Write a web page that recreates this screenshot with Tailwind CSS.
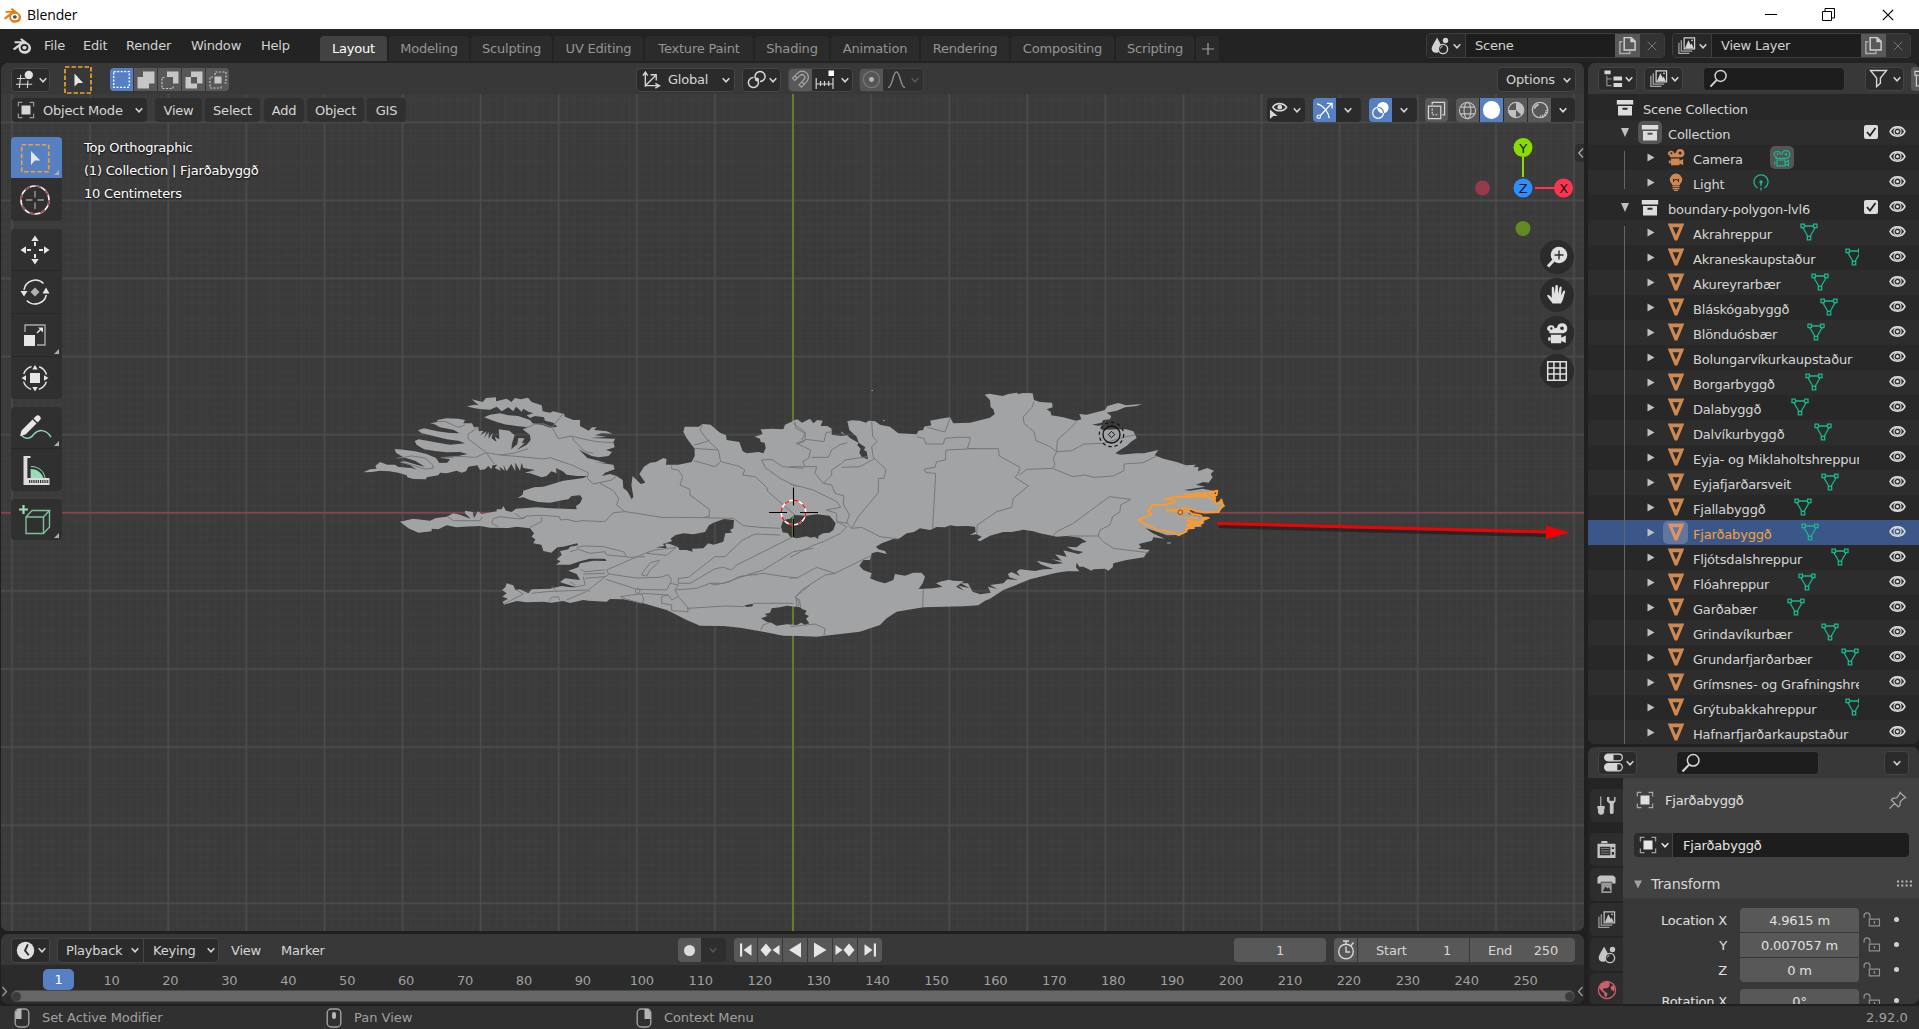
<!DOCTYPE html>
<html lang="en">
<head>
<meta charset="utf-8">
<title>Blender</title>
<script src="https://cdn.jsdelivr.net/npm/@tailwindcss/browser@4"></script>
</head>
<body class="w-[1919px] h-[1029px] overflow-hidden bg-[#202020] font-['DejaVu_Sans',sans-serif] text-[13px] leading-none tracking-[-0.2px] text-[#d6d6d6] whitespace-nowrap flex flex-col">

<svg width="0" height="0" class="absolute" fill="none">
  <symbol id="chev" viewBox="0 0 10 10"><path d="M1.7 3.2 5 6.8 8.3 3.2" fill="none" stroke="currentColor" stroke-width="1.5"/></symbol>
  <symbol id="logo" viewBox="0 0 20 20"><path d="M.8 13.8 8 8.2H2.6V6.3h7.6L8 4.6 9.6 3.2l7 5.4a6.2 5.7 0 1 1-10 4.2V12l-3.9 3.2z" fill="currentColor"/><ellipse cx="12.5" cy="12.6" rx="3.9" ry="3.5" class="fill-(--ring)"/><ellipse cx="12.5" cy="12.6" rx="2.1" ry="1.9" class="fill-(--eye)"/></symbol>
  <symbol id="scene" viewBox="0 0 20 20"><path d="M7 1.5c1.8 3.5 4.3 6.800 4.300 9.500L8 16.500c-3.300 1-6.300-.5-6.300-3.500C1.700 10 5 6 7 1.500z" fill="currentColor"/><circle cx="15.500" cy="4.500" r="2.700" fill="currentColor"/><circle cx="13" cy="13" r="4.600" fill="#282828" stroke="currentColor" stroke-width="1.400"/><path d="M10.500 12.500a2.500 2.500 0 0 1 2-2.200" fill="none" stroke="currentColor"/></symbol>
  <symbol id="layers" viewBox="0 0 20 20"><path d="M2 7v11.300h11M4.500 4.500V16H16" fill="none" stroke="currentColor" stroke-width="1.300" opacity=".75"/><path d="M7.500 2h11v11.500h-11z" fill="none" stroke="currentColor" stroke-width="1.300"/><path d="M8.500 12.500 12 4.500l2.500 5 1-1.500 2 4.500z" fill="currentColor"/><circle cx="15.800" cy="4.600" r="1" fill="currentColor"/></symbol>
  <symbol id="copy" viewBox="0 0 20 20"><path d="M4.500 6H2v12.500h10.500V16" fill="none" stroke="currentColor" stroke-width="1.500" opacity=".7"/><path d="M6.500 1.700h7.500l4 4v9h-11.500z" fill="none" stroke="currentColor" stroke-width="1.500"/><path d="M13 1.500v5h5z" fill="currentColor"/></symbol>
  <symbol id="ex" viewBox="0 0 10 10"><path d="m.7.7 8.600 8.600m0-8.600L.7 9.300" fill="none" stroke="currentColor" stroke-width="1"/></symbol>
  <symbol id="obj" viewBox="0 0 20 20"><path d="M1.500 6V1.500H6M14 1.500h4.500V6M18.500 14v4.500H14M6 18.500H1.500V14" fill="none" stroke="currentColor" stroke-width="1.300" opacity=".65"/><path d="M5 5h10v10H5z" fill="currentColor"/></symbol>
  <symbol id="cursor" viewBox="0 0 10 14"><path d="M.5.5v13l3.600-3.600h5z" fill="#e6e6e6"/></symbol>
  <symbol id="search" viewBox="0 0 20 20"><circle cx="12.200" cy="7.300" r="5.800" fill="none" stroke="currentColor" stroke-width="1.500"/><path d="m8 11.700-6.500 6.800" stroke="currentColor" stroke-width="2"/></symbol>
  <symbol id="box" viewBox="0 0 18 18"><path d="M.8 1h16.400v4.500H.8z" fill="currentColor"/><path d="M2 7h14v9.500H2zm4.500 1.800v2h5v-2z" fill="currentColor" fill-rule="evenodd"/></symbol>
  <symbol id="mesh" viewBox="0 0 18 18"><path d="M.7.600h16.600L10.300 17.500H7.700z" fill="currentColor"/><path d="M5.600 4.300h6.800L9 12z" class="fill-(--hole)"/></symbol>
  <symbol id="mdata" viewBox="0 0 18 18"><path d="M4 3h10M3 5l5 8.500M15 5l-5 8.500" stroke="currentColor" stroke-width="1.300" fill="none"/><path d="M1 1.200h3.400v3.400H1zm12.600 0H17v3.400h-3.400zM7.300 13.400h3.400v3.400H7.300z" fill="none" stroke="currentColor" stroke-width="1.300"/></symbol>
  <symbol id="cam" viewBox="0 0 18 18"><path d="M4 2.700a2.800 2.800 0 0 1 3 2.600 3.200 3.200 0 0 1 2-.5A4.200 4.200 0 1 1 14 9.300H2.800V7.500C0 7 .3 3 4 2.700zm.300 1.600a1 1 0 1 0 .1 2 1 1 0 0 0 0-2zM13 3.600a1.500 1.500 0 1 0 .1 3 1.500 1.500 0 0 0 0-3z" fill="currentColor" fill-rule="evenodd"/><path d="M4 10.500h8.500v2.300l3.700-1.800v6.200l-3.700-1.700v1.800H4z" fill="currentColor"/><path d="M1.800 12.500h2v2.800h-2z" fill="currentColor"/></symbol>
  <symbol id="camo" viewBox="0 0 18 18"><g fill="none" stroke="currentColor" stroke-width="1.200"><path d="M4 2.500A2.400 2.400 0 0 1 7 5h2a3.900 3.900 0 1 1 4.500 4.300H3V7.500C0 7 .5 2.800 4 2.500zM4 11h8v5.800H4zM12 13.500l3.500-2v5l-3.500-1.500M1.800 12.500v3"/></g><circle cx="4.500" cy="5" r="1" fill="currentColor"/><circle cx="13" cy="5.200" r="1.200" fill="currentColor"/></symbol>
  <symbol id="bulb" viewBox="0 0 18 18"><path d="M9 .5a6.300 6.300 0 0 1 6.200 6.300c0 2.500-2.200 3.700-2.700 5.700h-7c-.500-2-2.700-3.200-2.700-5.700A6.300 6.300 0 0 1 9 .5z" fill="currentColor"/><path d="M6.500 9V6l1.300 1.300L9 6l1.200 1.300L11.500 6v3" stroke="#2b2b2b" fill="none"/><path d="M5.500 13.700h7M5.500 15.600h7M7 17.400h4" stroke="currentColor" stroke-width="1.200"/></symbol>
  <symbol id="ldata" viewBox="0 0 18 18"><circle cx="9" cy="7.800" r="7" fill="none" stroke="currentColor" stroke-width="1.300" stroke-dasharray="37 7" transform="rotate(118 9 7.800)"/><circle cx="9" cy="8" r="1.700" fill="currentColor"/><path d="M9 9v9" stroke="currentColor" stroke-width="1.300" stroke-dasharray="3 1.500"/></symbol>
  <symbol id="eye" viewBox="0 0 18 14"><path d="M1 7C4 .3 14 .3 17 7 14 13.700 4 13.700 1 7z" fill="none" stroke="currentColor" stroke-width="1.900"/><circle cx="9" cy="7" r="3.800" fill="none" stroke="currentColor" stroke-width="1.200"/><circle cx="9" cy="7" r="1.700" fill="currentColor"/></symbol>
  <symbol id="mouse" viewBox="0 0 16 20"><rect x="1.200" y="1" width="13.600" height="18" rx="4" fill="none" stroke="currentColor" stroke-width="1.400"/></symbol>
  <symbol id="lock" viewBox="0 0 20 16"><path d="M1.200 6V4a3.300 3.300 0 0 1 6.600 0v3" fill="none" stroke="currentColor" stroke-width="1.300"/><path d="M7 7.500h11.300V15H7z" fill="none" stroke="currentColor" stroke-width="1.300"/><path d="M12.700 9.800v3" stroke="currentColor" stroke-width="1.500"/></symbol>
</svg>

<!-- title bar -->
<div class="h-[29px] shrink-0 bg-white flex items-center text-black">
  <svg class="w-[19px] h-[19px] ml-[3px] text-[#e87d0d] [--ring:#fff] [--eye:#265787]"><use href="#logo"/></svg>
  <span class="ml-[5px] text-[14px] font-['Open_Sans',sans-serif] tracking-[-0.100px]">Blender</span>
  <svg class="ml-auto w-[12px] h-[12px]" viewBox="0 0 12 12"><path d="M0 5.500h12" stroke="#000"/></svg>
  <svg class="ml-[45px] w-[13px] h-[13px]" viewBox="0 0 13 13"><path d="M.5 3.500h9v9h-9zM3 3V.500h9.500V10H10" fill="none" stroke="#000"/></svg>
  <svg class="ml-[47px] mr-[25px] w-[12px] h-[12px]"><use href="#ex"/></svg>
</div>

<!-- menu + workspaces -->
<div class="h-[34px] shrink-0 bg-[#232323] flex text-[#d2d2d2]">
  <div class="flex items-center h-[32px] w-[320px]">
    <svg class="w-[20px] h-[20px] ml-[12px] text-[#d8d8d8] [--ring:#232323] [--eye:#d8d8d8]"><use href="#logo"/></svg>
    <span class="ml-[12px] w-[39px]">File</span><span class="w-[43px]">Edit</span><span class="w-[65px]">Render</span><span class="w-[70px]">Window</span><span>Help</span>
  </div>
  <div class="flex gap-[2px] mt-[7px] h-[25px] text-[#959595]">
    <div class="w-[67px] rounded-t-[4px] bg-[#424242] text-white flex items-center justify-center">Layout</div>
    <div class="w-[80px] rounded-t-[4px] bg-[#2b2b2b] flex items-center justify-center">Modeling</div>
    <div class="w-[81px] rounded-t-[4px] bg-[#2b2b2b] flex items-center justify-center">Sculpting</div>
    <div class="w-[89px] rounded-t-[4px] bg-[#2b2b2b] flex items-center justify-center">UV Editing</div>
    <div class="w-[108px] rounded-t-[4px] bg-[#2b2b2b] flex items-center justify-center">Texture Paint</div>
    <div class="w-[74px] rounded-t-[4px] bg-[#2b2b2b] flex items-center justify-center">Shading</div>
    <div class="w-[88px] rounded-t-[4px] bg-[#2b2b2b] flex items-center justify-center">Animation</div>
    <div class="w-[88px] rounded-t-[4px] bg-[#2b2b2b] flex items-center justify-center">Rendering</div>
    <div class="w-[103px] rounded-t-[4px] bg-[#2b2b2b] flex items-center justify-center">Compositing</div>
    <div class="w-[78px] rounded-t-[4px] bg-[#2b2b2b] flex items-center justify-center">Scripting</div>
    <div class="w-[23px] rounded-t-[4px] bg-[#2b2b2b] flex items-center justify-center"><svg class="w-[12px] h-[12px]" viewBox="0 0 12 12"><path d="M0 6h12M6 0v12" stroke="#a0a0a0" stroke-width="1.200"/></svg></div>
  </div>
  <div class="ml-auto mr-[8px] mt-[4px] flex gap-[7px] h-[25px]">
    <div class="flex rounded-[4px] border border-[#3d3d3d] overflow-hidden w-[239px]">
      <div class="w-[38px] bg-[#282828] flex items-center pl-[3px] gap-[2px]"><svg class="w-[20px] h-[20px]"><use href="#scene"/></svg><svg class="w-[10px] h-[10px]"><use href="#chev"/></svg></div>
      <div class="w-[150px] bg-[#1d1d1d] border-l border-[#3d3d3d] pl-[9px] flex items-center">Scene</div>
      <div class="w-[25px] bg-[#585858] flex items-center justify-center"><svg class="w-[19px] h-[19px]"><use href="#copy"/></svg></div>
      <div class="flex-1 bg-[#333] flex items-center justify-center text-[#777]"><svg class="w-[10px] h-[10px]"><use href="#ex"/></svg></div>
    </div>
    <div class="flex rounded-[4px] border border-[#3d3d3d] overflow-hidden w-[239px]">
      <div class="w-[38px] bg-[#282828] flex items-center pl-[4px] gap-[2px]"><svg class="w-[19px] h-[19px]"><use href="#layers"/></svg><svg class="w-[10px] h-[10px]"><use href="#chev"/></svg></div>
      <div class="w-[150px] bg-[#1d1d1d] border-l border-[#3d3d3d] pl-[9px] flex items-center">View Layer</div>
      <div class="w-[25px] bg-[#585858] flex items-center justify-center"><svg class="w-[19px] h-[19px]"><use href="#copy"/></svg></div>
      <div class="flex-1 bg-[#333] flex items-center justify-center text-[#777]"><svg class="w-[10px] h-[10px]"><use href="#ex"/></svg></div>
    </div>
  </div>
</div>

<div class="flex h-[943px] shrink-0">
<!-- left column -->
<div class="w-[1584px] shrink-0 pl-px mr-[4px] flex flex-col">
  <div class="h-[868px] rounded-[7px] overflow-hidden relative bg-[#3b3b3b]">
    <div class="h-[31px] bg-[#383838] flex items-center pl-[10px] pt-[2px] relative z-10">
      <div class="w-[39px] h-[24px] rounded-[4px] border border-[#454545] bg-[#2b2b2b] flex items-center pl-[4px]"><svg class="w-[19px] h-[19px]" viewBox="0 0 20 20"><path d="M1 9h9M0 15h17M5 5 3.500 19M12.500 11l-.5 8" stroke="currentColor" stroke-width="1.200" fill="none"/><circle cx="13.500" cy="5.200" r="4.400" fill="#e0e0e0"/></svg><svg class="w-[10px] h-[10px] ml-[3px]"><use href="#chev"/></svg></div>
      <svg class="ml-[14px] w-[28px] h-[28px]" viewBox="0 0 28 28"><rect x="1" y="1" width="26" height="26" fill="none" stroke="#f0a32e" stroke-width="1.700" stroke-dasharray="4.500 2"/><use href="#cursor" x="10" y="7" width="10" height="14"/></svg>
      <div class="ml-[18px] flex h-[23px] rounded-[4px] overflow-hidden gap-px text-[#c6c6c6]">
        <div class="w-[23px] bg-[#5680c2] flex items-center justify-center"><svg class="w-[17px] h-[17px]" viewBox="0 0 17 17"><rect x=".7" y=".7" width="15.600" height="15.600" fill="none" stroke="#fff" stroke-width="1.300" stroke-dasharray="2 1.500"/></svg></div>
        <div class="w-[23px] bg-[#585858] flex items-center justify-center"><svg class="w-[18px] h-[18px]" viewBox="0 0 18 18"><path d="M6 .5h11.500v12H12v5H.5V6H6z" fill="currentColor"/></svg></div>
        <div class="w-[23px] bg-[#585858] flex items-center justify-center"><svg class="w-[18px] h-[18px]" viewBox="0 0 18 18"><path d="M6 .5h11.500v12H12V6H6z" fill="currentColor"/><path d="M3.500 6.500H1v11h11V15" fill="none" stroke="currentColor" stroke-width="1.200" stroke-dasharray="2 1.500"/></svg></div>
        <div class="w-[23px] bg-[#585858] flex items-center justify-center"><svg class="w-[18px] h-[18px]" viewBox="0 0 18 18"><path d="M6 .5h11.500v12H12v5H.500V6H6zM6 6v6.500h6V6z" fill="currentColor" fill-rule="evenodd"/></svg></div>
        <div class="w-[23px] bg-[#585858] flex items-center justify-center"><svg class="w-[18px] h-[18px]" viewBox="0 0 18 18"><path d="M5.500 5.500h7v7h-7z" fill="currentColor"/><path d="M6 4V1h11v11h-3M4 6H1v11h11v-3" fill="none" stroke="currentColor" stroke-width="1.200" stroke-dasharray="2 1.500"/></svg></div>
      </div>
      <div class="ml-[407px] w-[99px] h-[24px] rounded-[4px] border border-[#454545] bg-[#2b2b2b] flex items-center pl-[5px]"><svg class="w-[19px] h-[19px]" viewBox="0 0 20 20"><path d="M3.500 17.500V3m-2.500 3 2.500-4L6 6M3 16.500h14m-3-2.500 4.500 2.500L14 19M4 16 14 6m-5-1h6v6" fill="none" stroke="currentColor" stroke-width="1.400"/></svg><span class="ml-[7px]">Global</span><svg class="w-[10px] h-[10px] ml-auto mr-[3px]"><use href="#chev"/></svg></div>
      <div class="ml-[7px] w-[39px] h-[24px] rounded-[4px] border border-[#454545] bg-[#2b2b2b] flex items-center pl-[4px]"><svg class="w-[20px] h-[20px]" viewBox="0 0 20 20"><path d="M11 10.500A5 5 0 1 1 6.500 7.500M8.500 8.500a5 5 0 1 1 4.500 3" fill="none" stroke="currentColor" stroke-width="1.500"/><circle cx="10" cy="9.500" r="2" fill="currentColor"/></svg><svg class="w-[10px] h-[10px] ml-px"><use href="#chev"/></svg></div>
      <div class="ml-[7px] w-[65px] h-[24px] rounded-[4px] border border-[#454545] bg-[#2b2b2b] flex items-center overflow-hidden"><div class="w-[23px] h-full bg-[#585858] flex items-center justify-center"><svg class="w-[19px] h-[19px] text-[#a5a5a5]" viewBox="0 0 20 20"><path d="M1.500 8.500 7 3.300a6.500 6.500 0 0 1 9.500 9L11 18l-2.500-2.300 5-5.500a3 3 0 0 0-4-4.500L4 11zM14 15l-2.700-2.500M6.500 8.700 4 6.300" fill="none" stroke="currentColor" stroke-width="1.300"/></svg></div><svg class="w-[20px] h-[20px] ml-[3px]" viewBox="0 0 20 20"><path d="M1.200 8v11M18 8v11M1.200 14H18M5.500 11v5M9.500 11v5M13.700 11v5" stroke="currentColor" stroke-width="1.200"/><path d="M13.500.500H19V6h-5.500z" fill="#fff"/></svg><svg class="w-[10px] h-[10px] ml-[5px]"><use href="#chev"/></svg></div>
      <div class="ml-[6px] w-[65px] h-[24px] rounded-[4px] border border-[#404040] bg-[#303030] flex items-center overflow-hidden"><div class="w-[23px] h-full bg-[#555] flex items-center justify-center"><svg class="w-[19px] h-[19px]" viewBox="0 0 20 20"><circle cx="10" cy="10" r="8.500" fill="none" stroke="#777" stroke-width="1.300"/><circle cx="10" cy="10" r="2.600" fill="#b5b5b5"/></svg></div><svg class="w-[19px] h-[19px] ml-[4px] text-[#909090]" viewBox="0 0 20 20"><path d="M1 18.500C6 18.500 6 2 10 2s4 16.500 9 16.500" fill="none" stroke="currentColor" stroke-width="1.500"/></svg><svg class="w-[10px] h-[10px] ml-[4px] text-[#5a5a5a]"><use href="#chev"/></svg></div>
      <div class="ml-auto mr-[8px] w-[79px] h-[25px] rounded-[4px] border border-[#454545] bg-[#2b2b2b] flex items-center pl-[8px]">Options<svg class="w-[10px] h-[10px] ml-auto mr-[3px]"><use href="#chev"/></svg></div>
    </div>

    <!-- viewport canvas -->
    <svg class="absolute left-0 top-[31px]" width="1583" height="837" viewBox="1 94 1583 837">
      <defs>
        <pattern id="minor" x="793" y="512.700" width="7.810" height="7.810" patternUnits="userSpaceOnUse"><path d="M0 0h7.810M0 0v7.810" stroke="#404040" stroke-width="1.400"/></pattern>
        <pattern id="major" x="754" y="473.700" width="78.100" height="78.100" patternUnits="userSpaceOnUse"><path d="M0 39h78.100M39 0v78.100" stroke="#4d4d4d" stroke-width="1.400"/></pattern>
        <mask id="holes" maskUnits="userSpaceOnUse" x="0" y="0" width="1600" height="1029">
          <rect width="1600" height="1029" fill="#fff"/>
          <g transform="translate(790 370) scale(.33333)" fill="#000">
            <path d="M258 530 275 520 310 507 325 508 350 490 372 486 390 475 420 480 440 471 465 472 480 466 500 469 530 468 555 470 557 485 540 495 560 493 575 500 562 510 570 514 600 497 640 486 665 486 700 479 730 484 750 490 800 500 830 498 870 503 890 515 875 520 860 532 830 530 850 540 880 546 865 552 820 541 830 560 795 553 815 572 785 568 820 580 790 583 740 572 752 583 790 597 760 598 735 603 690 598 680 605 690 618 664 606 654 612 658 622 684 630 652 628 640 640 600 645 622 657 594 650 602 668 570 673 548 665 534 640 512 640 540 655 505 647 522 662 498 650 522 634 490 632 476 629 450 635 438 640 458 650 430 655 386 657 398 640 405 620 395 608 370 608 345 617 315 612 310 630 285 640 262 634 240 625 245 610 220 600 208 587 220 570 240 570 245 550 262 545 290 552 285 543 265 538z"/>
            <path d="M-27 470-20 450 0 446 12 435 50 437 80 433 118 437 127 447 137 460 130 480 118 488 100 490 86 497 84 507 74 500 62 503 50 499 20 505 0 500-6 490-22 487z"/>
            <path d="M-87 745-68 738-76 732-60 728-55 715-30 712-10 707 30 712 38 718 50 722 44 732 57 738 48 746 58 760 44 764 34 758 20 765-10 763-40 767-56 758-70 755z"/>
          </g>
          <path transform="translate(350 370) scale(.33333)" fill="#000" d="M917 532 945 528 938 522 966 514 962 506 975 496 1000 490 1030 493 1065 486 1077 466 1090 458 1122 447 1152 450 1150 475 1140 480 1146 488 1126 490 1120 515 1106 520 1090 524 1075 520 1060 535 1026 536 1028 545 1010 540 988 540 985 532 960 522 945 520 950 535zM1184 706 1208 702 1208 709 1190 711z"/>
        </mask>
      </defs>
      <rect x="0" y="94" width="1600" height="840" fill="url(#minor)"/>
      <rect x="0" y="94" width="1600" height="840" fill="url(#major)"/>
      <path d="M0 512.800h1600" stroke="#91404b" stroke-width="1.600"/>
      <path d="M793 94v840" stroke="#628a2a" stroke-width="1.700"/>
      <g mask="url(#holes)" fill="#a1a3a5" stroke-linejoin="round">
        <path transform="translate(350 370) scale(.33333)" d="M40 307 60 298 80 296 76 288 90 276 112 284 135 284 145 291 185 294 200 299 180 285 148 276 165 274 205 286 225 290 195 272 160 262 138 248 134 237 160 239 195 244 230 252 258 264 268 279 292 278 300 268 272 263 310 262 335 256 352 252 330 246 290 247 255 243 222 238 200 225 194 213 206 208 240 214 268 219 300 224 345 220 325 212 290 208 250 198 215 190 204 181 222 175 262 184 300 189 328 190 312 180 270 172 252 162 240 160 262 156 262 150 290 145 325 146 345 150 340 160 366 160 372 172 385 170 386 184 400 182 392 196 410 184 402 205 416 186 416 206 428 188 425 205 440 216 434 200 448 208 446 178 462 180 478 182 494 196 486 220 484 238 502 222 505 204 524 205 515 220 525 218 500 240 530 224 542 210 540 195 518 178 535 172 500 168 470 164 440 156 402 142 420 134 450 130 475 136 505 138 540 150 548 160 580 166 600 173 622 170 610 158 585 152 582 142 555 138 540 144 530 136 550 130 535 125 520 116 515 125 498 110 490 124 475 112 455 124 440 110 420 119 395 118 370 114 350 109 375 104 386 106 365 88 398 96 408 84 438 82 438 94 470 86 484 96 495 84 512 88 534 83 545 96 575 106 578 124 600 128 610 124 642 132 645 140 670 150 690 150 690 168 716 182 726 172 740 172 732 180 770 184 788 191 755 190 735 196 770 200 722 204 796 206 790 216 794 232 768 240 786 246 776 258 745 262 725 258 700 246 685 236 712 264 745 272 770 280 730 276 790 284 794 298 765 308 756 318 780 312 800 318 818 330 820 354 832 364 845 388 850 380 844 345 848 318 860 330 872 342 886 338 868 312 882 290 900 278 918 276 940 264 950 268 948 284 985 284 1025 276 1034 258 1034 236 1010 205 1000 185 1004 170 1046 170 1058 162 1082 164 1110 188 1128 196 1130 210 1168 216 1178 244 1190 250 1226 246 1240 250 1247 235 1244 218 1232 216 1230 206 1214 200 1238 192 1232 178 1265 176 1300 178 1305 164 1328 154 1334 154 1334 798 1300 797 1240 785 1170 773 1120 768 1050 767 1010 750 970 730 950 720 880 700 820 688 780 687 770 695 715 692 700 690 660 699 640 693 605 698 580 695 530 697 500 693 462 704 458 695 474 686 457 680 470 670 456 660 466 652 470 640 490 646 496 660 510 658 535 670 545 658 600 656 635 648 660 652 680 652 640 640 630 636 645 625 690 630 680 612 655 602 685 592 690 580 730 572 770 573 765 566 720 566 690 574 660 584 618 584 632 574 620 568 635 555 630 543 655 538 660 530 684 526 682 520 640 530 622 532 604 548 580 543 574 524 550 520 556 508 545 500 552 490 540 475 500 470 475 474 420 473 390 468 340 470 320 472 290 466 265 478 245 476 245 484 205 488 175 475 150 455 190 446 240 452 258 444 290 440 310 430 330 434 362 446 345 430 345 422 368 426 372 444 384 424 395 432 440 424 440 418 455 418 460 408 468 422 485 426 498 416 560 412 600 415 680 418 678 408 690 400 697 385 690 376 665 378 655 388 640 390 600 398 565 396 540 390 520 382 503 384 518 374 520 362 552 352 580 350 620 338 640 332 700 324 712 318 680 318 650 314 638 304 618 294 620 310 604 304 590 318 575 322 540 310 524 308 555 300 520 294 515 278 510 302 496 278 496 304 484 282 470 304 460 284 464 302 448 290 452 302 434 294 442 284 428 286 424 298 415 288 405 298 390 300 382 286 355 290 348 304 335 308 320 302 290 310 270 308 265 316 230 322 228 328 190 327 172 322 170 316 145 308 118 304 90 302 66 306z"/>
        <path transform="translate(790 370) scale(.33333)" d="M9 152 22 148 36 158 60 146 70 160 82 150 98 152 92 168 112 168 125 176 125 194 152 198 172 196 180 204 205 218 202 226 212 236 208 248 216 262 234 268 230 245 222 240 226 232 206 218 200 200 178 180 172 154 186 151 210 152 228 158 235 152 256 154 270 164 300 170 325 190 380 193 385 182 400 180 402 170 424 166 420 152 450 146 480 142 490 160 540 158 600 143 614 132 610 118 602 112 600 90 584 74 598 71 638 78 655 72 680 68 686 72 700 69 728 70 732 90 750 96 786 98 788 112 770 118 782 126 784 136 820 142 858 152 874 148 868 132 890 134 945 120 952 108 985 99 1008 106 1056 102 1040 108 1005 112 980 122 950 128 964 138 960 148 940 150 935 158 906 164 925 167 938 166 935 180 980 178 1008 178 1030 184 1040 204 1022 216 1010 228 990 240 976 250 990 254 1040 250 1062 250 1105 240 1094 256 1120 266 1160 276 1188 286 1218 284 1210 290 1226 292 1224 304 1252 294 1272 302 1262 312 1268 322 1256 338 1240 336 1218 344 1246 350 1182 360 1200 362 1238 356 1276 364 1270 376 1278 400 1294 388 1302 408 1288 426 1245 428 1200 420 1195 432 1252 444 1230 462 1236 470 1206 472 1186 486 1166 495 1130 496 1102 485 1066 474 1088 490 1124 506 1090 502 1086 512 1046 522 1054 532 1044 536 1080 540 1070 548 1062 562 1010 570 970 580 968 592 955 602 945 596 910 598 905 602 880 590 868 590 860 578 858 592 868 604 830 604 800 608 760 618 720 628 640 660 600 686 585 692 565 706 520 709 400 712 320 725 290 745 270 765 210 785 80 800 9 797z"/>
        <g fill="none" stroke="#75777a" stroke-width="3">
          <path transform="translate(350 370) scale(.33333)" d="M260 155 285 154 325 172 345 165M385 172 355 192 354 206 408 247 433 282M272 263 320 259 378 262 408 248 450 255 495 249 535 236M450 255 510 260 580 267 600 263 665 285 715 308 712 325 730 342 785 330 800 318M140 265 185 258 225 264 248 285 250 295 225 297 160 278M526 175 556 162 582 162 606 172 625 206 665 198 690 205 740 215 790 218M606 172 640 130M665 198 672 212 705 245 730 250M750 340 790 362 806 385 800 405 825 425 860 430 940 443 960 442 1060 443 1078 438 1078 418 1020 375 1020 358 990 345 998 320 985 300 965 297 965 286M825 425 790 428 765 455 695 452 680 455 650 448 632 450 628 440 575 436 530 438 515 445 495 430M430 446 450 440 500 446 520 446 530 438M430 446 425 460 445 470M575 440 575 455 540 472M290 438 310 452 390 452 398 440M1058 165 1050 180 1074 212 1105 240 1112 275M1032 225 1070 215 1078 210M1032 235 1102 240M1032 272 1095 290 1112 275 1165 288 1185 300 1178 315 1216 320 1250 352 1254 365 1335 435M1235 270 1265 268 1298 290 1360 295M1235 270 1245 292 1290 325 1340 350M1060 443 1150 445 1180 467 1230 472 1290 475M985 625 1015 622 1095 560 1125 560 1178 510 1215 492 1290 495M985 625 985 640 1020 640 1095 596 1120 592 1145 600 1160 585 1330 500M975 660 1040 655 1080 640 1120 640 1200 612 1240 600 1330 545 1390 535M1080 640 1095 645 1140 635 1165 620 1240 610 1290 618 1345 624M1200 612 1220 615M680 533 700 528 760 530 820 545 832 562M660 545 685 538 720 550 765 545 770 555 830 560M832 562 885 560M770 600 885 550 915 540 978 532 950 556 890 550M930 570 902 578 885 598 875 615 890 618 900 600 928 575M770 600 776 612 860 624 930 622 955 614 965 630 950 660 860 658 830 648 768 628M776 612 710 664 650 690M765 600 705 605 690 598M765 610 700 612M705 625 765 620M700 620 705 645 680 650 660 635M545 670 590 665 615 664 710 660 720 664M605 650 620 662M500 660 520 672 462 702M598 692 605 682 625 680 630 692M812 680 820 685 875 700 882 690 875 670 955 675 965 690 985 680 1020 720M812 680 845 675 875 672M955 675 935 680 935 700 965 705 965 722 1015 725 1012 715 1130 708 1180 710 1215 700 1330 700M960 640 985 645 975 660 985 680M1340 685 1340 725 1350 690 1335 682 1380 645M1232 780 1240 765 1265 755M1335 155 1338 175 1365 190 1355 210"/>
          <circle cx="863" cy="663" r="7" transform="translate(350 370) scale(.33333)"/>
          <path transform="translate(790 370) scale(.33333)" d="M10 160 46 188 45 210 20 220 62 240 56 265 38 275 45 290 80 290 75 310 100 340 125 345 135 370 162 378 160 402 178 435 170 458 185 475M18 222 42 215 48 208 102 215 108 188 125 185M65 262 115 262 125 240 150 224 172 218M45 290 0 290M0 342 70 360 140 395 152 412 108 420 140 430 140 455 175 460M100 340 125 315 125 300 155 280 165 270 232 260M155 292 210 290 255 265M245 155 248 200 262 215 245 230 250 262 288 298 282 325 265 325 265 368 205 440 185 475M140 455 170 470 152 490 100 515 65 528 0 562M185 475 215 472 270 500 330 507M0 625 25 622 80 592 135 610 240 558M135 610 105 615 35 660 15 682 30 698 32 712M0 770 75 762 105 775 102 798M412 172 465 186 480 145M380 200 402 205 408 222 460 222 465 205 500 202 540 202 540 212 532 235 560 236 625 236 628 258 690 292 685 310 675 322 715 348 670 385 665 412 620 425 562 465 560 492M468 240 560 236M468 240 466 270 440 275 435 292 403 297 408 308 437 310 428 475M400 657 398 712M732 95 726 112 700 140 702 160 732 185 738 212 780 230 800 245 845 242 882 222 940 220 1000 202 1035 195M860 155 830 185 802 210 800 245 790 265 795 285 788 295 848 320 885 315 912 322 970 318 1002 302 1002 282 1060 278 1100 258M788 295 710 298 688 315M788 500 800 485 850 460 958 380 1022 388 992 405 990 425 968 440 960 465 930 480 925 498 940 515 970 535 1075 548M835 498 925 498"/>
        </g>
      </g>
      <path d="M871.500 390.500h1.500M883 420.500h1.500M841 432l3 2M1167 543h4" stroke="#a1a3a5"/>
      <!-- selected object -->
      <g transform="translate(790 370) scale(.33333)" fill="none" stroke="#ff9a2a" stroke-width="5.500" stroke-linejoin="round">
        <path d="M1165 496 1150 486 1135 488 1128 482 1100 482 1088 472 1075 468 1060 458 1045 450 1070 438 1085 432 1072 422 1084 414 1086 405 1130 405 1138 400 1156 396 1146 388 1122 388 1160 380 1200 380 1240 372 1282 362 1280 375 1262 374 1276 382 1274 390 1278 402 1292 398 1294 388 1298 402 1302 408 1290 414 1286 426 1245 428 1220 424 1200 416 1176 414 1172 420 1130 420 1170 424 1196 424 1206 432 1232 436 1236 442 1256 444 1236 452 1240 458 1192 452 1232 464 1190 464 1212 474 1186 476 1190 484z"/>
        <path d="M1160 382 1260 378 1180 374 1276 368M1228 376 1275 388M1172 442 1225 446M1195 458 1238 461" stroke-width="4"/>
        <circle cx="1171" cy="427" r="7" fill="#ff9a2a" stroke="#4a3215" stroke-width="2"/>
      </g>
      <!-- light object -->
      <g transform="translate(1111.500 434.500)" fill="none" stroke="#111"><circle r="8.500" stroke-width="1.300"/><circle r="12.200" stroke-width="1.200" stroke-dasharray="3.300 3"/><path d="M0-3.200 3.200 0 0 3.200-3.200 0z"/></g>
      <!-- 3D cursor -->
      <circle cx="793.500" cy="512.500" r="12.200" fill="none" stroke="#fff" stroke-width="1.500"/><circle cx="793.500" cy="512.500" r="12.200" fill="none" stroke="#f01818" stroke-width="1.500" stroke-dasharray="4.790 4.790"/>
      <path d="M769 512.500h18M800 512.500h18M793.500 487.500v18M793.500 519v18" stroke="#000" stroke-width="1.100"/>
      <!-- arrow -->
      <g><path d="M1219 526.500 1548 535.500" stroke="#000" stroke-opacity=".35" stroke-width="3.500"/><path d="M1218.500 523.500 1550 532" stroke="#f50000" stroke-width="3" stroke-linecap="round"/><path d="M1546 525.500 1570 532.600 1546 539z" fill="#f50000"/></g>
      <!-- navigation gizmo -->
      <path d="M1523 157v20" stroke="#8adb00" stroke-width="2"/><path d="M1535 188h20" stroke="#ff3352" stroke-width="2"/>
      <circle cx="1482.500" cy="188" r="7.500" fill="#963949"/><circle cx="1523" cy="228.500" r="7.500" fill="#628a22"/>
      <circle cx="1523" cy="147.500" r="9.500" fill="#8adb00"/><circle cx="1523" cy="188" r="9.500" fill="#2c8fff"/><circle cx="1563.500" cy="188" r="9.500" fill="#ff3352"/>
      <g font-size="13" text-anchor="middle" fill="#111"><text x="1523" y="152.500">Y</text><text x="1523" y="193">Z</text><text x="1563.500" y="193">X</text></g>
      <g fill="#2b2b2b"><circle cx="1557" cy="257" r="17"/><circle cx="1557" cy="295" r="17"/><circle cx="1557" cy="333" r="17"/><circle cx="1557" cy="371" r="17"/></g>
      <circle cx="1559" cy="255" r="8.300" fill="#e0e0e0"/><path d="M1553.500 260.500 1548 266.500" stroke="#e0e0e0" stroke-width="3"/><path d="M1559 250.500v9M1554.500 255h9" stroke="#2b2b2b" stroke-width="1.400"/>
      <path d="M1552.500 303.500c-1.500-3-4-4.500-5.500-8 1.500-1.200 3 0 4.800 2.500V288c0-1.600 2-1.600 2.200 0l.8 6 .6-7.700c0-1.700 2.400-1.700 2.500 0l.2 7.700 1.400-6.500c.4-1.500 2.400-1 2.200.5l-.7 7.500 2.300-4.500c.8-1.200 2.300-.4 1.800 1-1.500 4-1.600 8-4.100 11.500z" fill="#e0e0e0"/>
      <svg x="1546" y="322" width="22" height="22" color="#e0e0e0"><use href="#cam"/></svg>
      <path d="M1547.700 361.700h18.600v18.600h-18.600zM1553.900 361.500v19M1560.100 361.500v19M1547.500 367.900h19M1547.500 374.100h19" fill="none" stroke="#e0e0e0" stroke-width="1.500"/>
      <rect x="1575" y="144" width="14" height="18" rx="4" fill="#2f2f2f"/><path d="M1583 148.500 1578.800 153l4.200 4.500" fill="none" stroke="#b0b0b0" stroke-width="1.200"/>
      <!-- toolbar -->
      <g fill="#303030">
        <path d="M11 178h51v39a4 4 0 0 1-4 4H15a4 4 0 0 1-4-4z"/><rect x="11" y="229" width="51" height="170" rx="4"/><rect x="11" y="407" width="51" height="84" rx="4"/><rect x="11" y="499" width="51" height="41" rx="4"/>
      </g>
      <path d="M11 270.500h51M11 313.500h51M11 356.500h51M11 448.500h51" stroke="#282828"/>
      <path d="M15 137h43a4 4 0 0 1 4 4v37H11v-37a4 4 0 0 1 4-4z" fill="#5680c2"/>
      <rect x="21.700" y="144.700" width="27" height="27" fill="none" stroke="#f0a32e" stroke-width="1.600" stroke-dasharray="4.500 2.250"/><path d="M31 151v14l3.800-4.500h5.500z" fill="#e6e6e6"/>
      <path d="M59 170v5h-5zM59 349v5h-5zM59 441v5h-5zM59 533v5h-5z" fill="#b0b0b0"/>
      <circle cx="35" cy="200" r="14" fill="none" stroke="#f2f2f2" stroke-width="1.700"/><circle cx="35" cy="200" r="14" fill="none" stroke="#a34a50" stroke-width="1.700" stroke-dasharray="5.500 5.500"/><path d="M26 200h6.500M37.500 200H44M35 191v6.500M35 202.500v6.500" stroke="#9a9a9a" stroke-width="1.400"/>
      <g fill="#e6e6e6" stroke="none"><path d="M35 235.500l3.700 5.500h-7.400zM35 264.500l3.700-5.500h-7.400zM20.500 250l5.500-3.700v7.400zM49.500 250l-5.500-3.700v7.400z"/><path d="M34 242h2v4h-2zM34 254h2v4h-2zM27 249h4v2h-4zM39 249h4v2h-4z"/></g>
      <path d="M24 290a11.500 11.500 0 0 1 19.500-6.500M46.300 295a11.500 11.500 0 0 1-19.500 5.500" fill="none" stroke="#e6e6e6" stroke-width="1.500"/><path d="M20.500 291h7l-3.500 5.500zM42.500 293.500h7L46 287.500z" fill="#e6e6e6"/><path d="M35 287.500l4.500 4.500-4.500 4.500-4.500-4.500z" fill="#b0b0b0"/>
      <path d="M25 332v-7h20v20h-8" fill="none" stroke="#a8a8a8" stroke-width="1.400"/><path d="M24 335h11v11H24z" fill="#e6e6e6"/><path d="m37 333 4-4" stroke="#e6e6e6" stroke-width="1.500"/><path d="M38 327.500h5v5z" fill="#e6e6e6"/>
      <circle cx="35" cy="378" r="12" fill="none" stroke="#e6e6e6" stroke-width="1.400" stroke-dasharray="11 7.850" stroke-dashoffset="-3.900"/><path d="M30 373h10v10H30zM35 365l2.700 4.500h-5.400zM35 391.500l2.700-4.500h-5.400zM21.500 378l4.500-2.700v5.400zM48.500 378l-4.500-2.700v5.400z" fill="#e6e6e6"/>
      <path d="M21 435c3 3 8 6 13-1 4-4 11-6 17 3" fill="none" stroke="#8fd4ae" stroke-width="1.500"/><path d="M20 436l1.500-5.500 11-11 4 4-11 11zM33.500 418.500l2.300-2.300a2.800 2.800 0 1 1 4 4l-2.300 2.300z" fill="#e6e6e6"/>
      <path d="M30.500 479v-10c7.500 0 12.500 5 13 10z" fill="#97dcb5"/><path d="M31 466.500c8 0 14 5.500 14 12.500" fill="none" stroke="#97dcb5"/><path d="M23.500 456h7v2h-3v20h22v7H23.500z" fill="#dcdcdc"/><path d="M29 459v19" stroke="#303030" stroke-width="3" stroke-dasharray="1.200 1"/><path d="M29 481.500h20" stroke="#303030" stroke-width="3" stroke-dasharray="1.200 1"/>
      <path d="M26 517h17.500v16.500H26zM26 517l6-6.500h17.500L43.500 517M49.500 510.500V527l-6 6.500" fill="none" stroke="#7fbf9c" stroke-width="1.400"/><path d="M23.500 505v9M19 509.500h9" stroke="#97dcb5" stroke-width="2.200"/>
    </svg>

    <!-- viewport header overlays -->
    <div class="absolute left-[11px] top-[35px] w-[1563px] h-[24px] flex">
      <div class="w-[135px] rounded-[4px] bg-[#2c2c2c] flex items-center pl-[5px]"><svg class="w-[18px] h-[18px]"><use href="#obj"/></svg><span class="ml-[8px]">Object Mode</span><svg class="w-[10px] h-[10px] ml-auto mr-[3px]"><use href="#chev"/></svg></div>
      <div class="ml-[8px] w-[47px] rounded-[4px] bg-[#303030] flex items-center justify-center">View</div>
      <div class="ml-[3px] w-[55px] rounded-[4px] bg-[#303030] flex items-center justify-center">Select</div>
      <div class="ml-[4px] w-[40px] rounded-[4px] bg-[#303030] flex items-center justify-center">Add</div>
      <div class="ml-[3px] w-[57px] rounded-[4px] bg-[#303030] flex items-center justify-center">Object</div>
      <div class="ml-[3px] w-[39px] rounded-[4px] bg-[#303030] flex items-center justify-center">GIS</div>
      <div class="ml-auto w-[38px] rounded-[4px] bg-[#2b2b2b] flex items-center pl-[2px]"><svg class="w-[19px] h-[19px]" viewBox="0 0 20 20"><path d="M4 6.500c3-5 11-5 14.500 0-3.500 5-11 5-14.500 0z" fill="none" stroke="currentColor" stroke-width="1.700"/><circle cx="11.300" cy="6.500" r="2.500" fill="currentColor"/><path d="M1 9v10l3.500-3.300H9z" fill="currentColor"/></svg><svg class="w-[10px] h-[10px] ml-[4px]"><use href="#chev"/></svg></div>
      <div class="ml-[8px] w-[48px] rounded-[4px] overflow-hidden bg-[#2b2b2b] flex items-center"><div class="w-[23px] h-full bg-[#5680c2] text-white flex items-center justify-center"><svg class="w-[19px] h-[19px]" viewBox="0 0 20 20"><path d="M2 3c6 1 12 8 13 15M5 16 17 3M12.500 2.500h5.500V8" fill="none" stroke="currentColor" stroke-width="1.400"/><circle cx="4" cy="16.500" r="1.800" fill="#5680c2" stroke="currentColor" stroke-width="1.200"/></svg></div><svg class="w-[10px] h-[10px] ml-[7px]"><use href="#chev"/></svg></div>
      <div class="ml-[8px] w-[48px] rounded-[4px] overflow-hidden bg-[#2b2b2b] flex items-center"><div class="w-[23px] h-full bg-[#5680c2] text-white flex items-center justify-center"><svg class="w-[19px] h-[19px]" viewBox="0 0 20 20"><circle cx="12.500" cy="7" r="6" fill="#fff"/><circle cx="7.500" cy="12.500" r="5.700" fill="none" stroke="#fff" stroke-width="1.300"/><path d="M7.500 6.800a5.700 5.700 0 0 1 5.700 5.700" fill="none" stroke="#5680c2" stroke-width="1.300"/></svg></div><svg class="w-[10px] h-[10px] ml-[7px]"><use href="#chev"/></svg></div>
      <div class="ml-[8px] w-[23px] rounded-[4px] bg-[#585858] flex items-center justify-center"><svg class="w-[19px] h-[19px]" viewBox="0 0 20 20"><path d="M5.500 4V1.500h13v13H16M1.500 5.500h13v13h-13z" fill="none" stroke="currentColor" stroke-width="1.300"/><path d="M5.500 8v6.500H12" fill="none" stroke="currentColor" stroke-width="1.200" stroke-dasharray="2 1.300"/></svg></div>
      <div class="ml-[8px] w-[119px] rounded-[4px] overflow-hidden bg-[#2b2b2b] flex items-center gap-px text-[#c0c0c0]">
        <div class="w-[23px] shrink-0 h-full bg-[#585858] flex items-center justify-center"><svg class="w-[19px] h-[19px]" viewBox="0 0 20 20"><g fill="none" stroke="currentColor" stroke-width="1.200"><circle cx="10" cy="10" r="8.500"/><ellipse cx="10" cy="10" rx="3.600" ry="8.500"/><path d="M2.500 6.500h15M2.500 13.500h15"/></g></svg></div>
        <div class="w-[23px] shrink-0 h-full bg-[#5680c2] flex items-center justify-center"><div class="w-[17px] h-[18px] rounded-full bg-white"></div></div>
        <div class="w-[23px] shrink-0 h-full bg-[#585858] flex items-center justify-center"><svg class="w-[18px] h-[18px]" viewBox="0 0 20 20"><circle cx="10" cy="10" r="8.500" fill="none" stroke="currentColor" stroke-width="1.300"/><path d="M10 1.500v8.500l6.500 6A8.500 8.500 0 0 0 10 1.500zM10 10H1.500A8.500 8.500 0 0 0 10 18.500z" fill="currentColor"/></svg></div>
        <div class="w-[23px] shrink-0 h-full bg-[#585858] flex items-center justify-center"><svg class="w-[18px] h-[18px]" viewBox="0 0 20 20"><circle cx="10" cy="10" r="8.500" fill="none" stroke="currentColor" stroke-width="1.500"/><path d="M4 8.500A6 6 0 0 1 8.500 4" fill="none" stroke="currentColor" stroke-width="1.800"/><path d="M10 17.500c4 0 7.500-3 7.500-7.500" fill="none" stroke="currentColor" stroke-width="3" stroke-dasharray="1.500 1.200"/></svg></div>
        <svg class="w-[10px] h-[10px] shrink-0 ml-[6px] text-[#e0e0e0]"><use href="#chev"/></svg>
      </div>
    </div>
    <div class="absolute left-[83px] top-[73px] text-[13px] tracking-[-0.200px] text-white leading-[23px] [text-shadow:0_1px_2px_#000]">Top Orthographic<br>(1) Collection | Fjarðabyggð<br>10 Centimeters</div>
  </div>

  <!-- timeline -->
  <div class="mt-[3px] h-[70px] rounded-[7px] overflow-hidden bg-[#2b2b2b] relative">
    <div class="h-[31px] bg-[#383838] flex items-center pl-[10px] pt-px">
      <div class="w-[39px] h-[25px] rounded-[4px] border border-[#454545] bg-[#2b2b2b] flex items-center pl-[4px]"><svg class="w-[19px] h-[19px]" viewBox="0 0 20 20"><circle cx="10" cy="10" r="9.200" fill="#e0e0e0"/><path d="M12.500 3.500 9.500 10l4 5" fill="none" stroke="#2b2b2b" stroke-width="2"/></svg><svg class="w-[10px] h-[10px] ml-[2px]"><use href="#chev"/></svg></div>
      <div class="ml-[7px] w-[162px] h-[25px] rounded-[4px] border border-[#454545] bg-[#2b2b2b] flex items-center"><div class="w-[86px] h-full border-r border-[#454545] flex items-center pl-[8px]">Playback<svg class="w-[10px] h-[10px] ml-auto mr-[3px]"><use href="#chev"/></svg></div><div class="flex-1 flex items-center pl-[9px]">Keying<svg class="w-[10px] h-[10px] ml-auto mr-[2px]"><use href="#chev"/></svg></div></div>
      <span class="ml-[12px] w-[50px]">View</span><span class="w-[397px]">Marker</span>
      <div class="w-[48px] h-[24px] rounded-[4px] overflow-hidden bg-[#2e2e2e] flex items-center"><div class="w-[23px] h-full bg-[#585858] flex items-center justify-center"><div class="w-[11px] h-[11px] rounded-full bg-[#dcdcdc]"></div></div><svg class="w-[10px] h-[10px] ml-[7px] text-[#555]"><use href="#chev"/></svg></div>
      <div class="ml-[8px] flex gap-px h-[24px] rounded-[4px] overflow-hidden text-[#e6e6e6]">
        <div class="w-[23px] bg-[#585858] flex items-center justify-center"><svg class="w-[14px] h-[14px]" viewBox="0 0 14 14"><path d="M1 .5h2.200v13H1zM12.500 1.200v11.600L4.500 7z" fill="currentColor"/></svg></div>
        <div class="w-[24px] bg-[#585858] flex items-center justify-center"><svg class="w-[20px] h-[14px]" viewBox="0 0 20 14"><path d="M6 .5 11.500 7 6 13.500.5 7zM19.500 2v10L12.500 7z" fill="currentColor"/></svg></div>
        <div class="w-[24px] bg-[#585858] flex items-center justify-center"><svg class="w-[14px] h-[16px]" viewBox="0 0 14 16"><path d="M13 .5v15L1 8z" fill="currentColor"/></svg></div>
        <div class="w-[24px] bg-[#585858] flex items-center justify-center"><svg class="w-[14px] h-[16px]" viewBox="0 0 14 16"><path d="M1 .5v15L13.500 8z" fill="currentColor"/></svg></div>
        <div class="w-[24px] bg-[#585858] flex items-center justify-center"><svg class="w-[20px] h-[14px]" viewBox="0 0 20 14"><path d="M14 .5 19.500 7 14 13.500 8.500 7zM.5 2v10L7.500 7z" fill="currentColor"/></svg></div>
        <div class="w-[24px] bg-[#585858] flex items-center justify-center"><svg class="w-[14px] h-[14px]" viewBox="0 0 14 14"><path d="M10.800.5H13v13h-2.200zM1.500 1.200v11.600L9.500 7z" fill="currentColor"/></svg></div>
      </div>
      <div class="ml-auto w-[92px] h-[24px] rounded-[4px] bg-[#585858] flex items-center justify-center">1</div>
      <div class="ml-[8px] mr-[9px] h-[24px] flex gap-px rounded-[4px] overflow-hidden">
        <div class="w-[23px] bg-[#585858] flex items-center justify-center"><svg class="w-[18px] h-[20px]" viewBox="0 0 18 20"><g fill="none" stroke="currentColor" stroke-width="1.400"><circle cx="9" cy="11.500" r="7.300"/><path d="M9 6.500v5.500h4M9 4V1.500M6 1h6M14 5.500l2.500-3"/></g></svg></div>
        <div class="w-[111px] bg-[#585858] flex items-center pl-[18px] pr-[18px] justify-between"><span>Start</span><span>1</span></div>
        <div class="w-[105px] bg-[#585858] flex items-center pl-[18px] pr-[17px] justify-between"><span>End</span><span>250</span></div>
      </div>
    </div>
    <div class="flex items-center h-[30px] text-[#a0a0a0] pl-[81px]" id="ruler"></div>
    <div class="absolute left-[42px] top-[35px] w-[31px] h-[21px] rounded-[5px] bg-[#5680c2] text-white flex items-center justify-center">1</div>
    <div class="absolute left-[10px] top-[56px] w-[1564px] h-[12px] rounded-full bg-[#676767] border border-[#4a4a4a] flex items-center justify-between"><div class="w-[9px] h-[9px] rounded-full bg-[#3c3c3c]"></div><div class="w-[9px] h-[9px] rounded-full bg-[#3c3c3c]"></div></div>
    <svg class="absolute left-0 top-[49px] w-[8px] h-[16px]" viewBox="0 0 8 16"><path d="m1.500 4 4 4.500-4 4.500" fill="none" stroke="#a0a0a0" stroke-width="1.200"/></svg>
    <svg class="absolute right-0 top-[49px] w-[8px] h-[16px]" viewBox="0 0 8 16"><path d="m6.500 4-4 4.500 4 4.500" fill="none" stroke="#a0a0a0" stroke-width="1.200"/></svg>
  </div>
</div>

<!-- right column -->
<div class="w-[331px] shrink-0 flex flex-col">
  <div class="h-[681px] rounded-[7px] overflow-hidden bg-[#282828] relative">
    <div class="h-[31px] bg-[#383838] flex items-center pl-[10px]">
      <div class="w-[39px] h-[24px] shrink-0 rounded-[4px] border border-[#454545] bg-[#2b2b2b] flex items-center pl-[5px]"><svg class="w-[19px] h-[19px]" viewBox="0 0 20 20"><path d="M.5 1.500h6.500v4H.5zM10 8h9v4.200h-9zM10 14.800h9V19h-9z" fill="currentColor"/><path d="M3 7v10.500h5M3 10.500h5" fill="none" stroke="#8a8a8a" stroke-width="1.300"/></svg><svg class="w-[10px] h-[10px] ml-px"><use href="#chev"/></svg></div>
      <div class="ml-[7px] w-[39px] h-[24px] shrink-0 rounded-[4px] border border-[#454545] bg-[#2b2b2b] flex items-center pl-[4px]"><svg class="w-[19px] h-[19px]"><use href="#layers"/></svg><svg class="w-[10px] h-[10px] ml-[2px]"><use href="#chev"/></svg></div>
      <div class="ml-[20px] w-[142px] h-[24px] shrink-0 rounded-[4px] border border-[#3d3d3d] bg-[#1d1d1d] flex items-center pl-[5px]"><svg class="w-[19px] h-[19px]"><use href="#search"/></svg></div>
      <div class="ml-[20px] w-[39px] h-[24px] shrink-0 rounded-[4px] border border-[#454545] bg-[#2b2b2b] flex items-center pl-[3px]"><svg class="w-[19px] h-[19px]" viewBox="0 0 20 20"><path d="M1.500 1.500h17l-6.500 8v5.500l-4 3.500V9.500z" fill="none" stroke="currentColor" stroke-width="1.500"/></svg><svg class="w-[10px] h-[10px] ml-[4px]"><use href="#chev"/></svg></div>
      <div class="ml-[7px] w-[39px] h-[24px] shrink-0 rounded-[4px] bg-[#585858] flex items-center pl-[3px]"><svg class="w-[17px] h-[17px]" viewBox="0 0 18 18"><path d="M1 1.500h16v4H1zM2.500 5.500V17H15V5.500M6 9.500h5" fill="none" stroke="currentColor" stroke-width="1.200"/></svg></div>
    </div>
    <div class="flex flex-col pt-px" id="tree"></div>
    <div class="absolute left-[36px] top-[88px] w-px h-[38px] bg-[#666]"></div>
    <div class="absolute left-[36px] top-[163px] w-px h-[518px] bg-[#666]"></div>
  </div>

  <div class="mt-[3px] h-[257px] rounded-[7px] overflow-hidden bg-[#242424] flex flex-col">
    <div class="h-[31px] shrink-0 bg-[#383838] flex items-center pl-[10px]">
      <div class="w-[39px] h-[24px] rounded-[4px] border border-[#454545] bg-[#2b2b2b] flex items-center pl-[5px]"><svg class="w-[19px] h-[19px]" viewBox="0 0 20 20"><rect x=".7" y="1.200" width="18.600" height="7" rx="3.500" fill="none" stroke="currentColor" stroke-width="1.300"/><path d="M4.200 1.200H10v7H4.200a3.500 3.500 0 0 1 0-7z" fill="currentColor"/><rect x=".7" y="11.200" width="18.600" height="7.500" rx="3.700" fill="none" stroke="currentColor" stroke-width="1.300"/><path d="M4.200 11.200H14v7.500H4.200a3.700 3.700 0 0 1 0-7.500z" fill="currentColor"/></svg><svg class="w-[10px] h-[10px] ml-[2px]"><use href="#chev"/></svg></div>
      <div class="ml-[39px] w-[143px] h-[24px] rounded-[4px] border border-[#3d3d3d] bg-[#1d1d1d] flex items-center pl-[4px]"><svg class="w-[20px] h-[20px]"><use href="#search"/></svg></div>
      <div class="ml-auto mr-[10px] w-[25px] h-[24px] rounded-[4px] border border-[#454545] bg-[#2b2b2b] flex items-center justify-center"><svg class="w-[10px] h-[10px]"><use href="#chev"/></svg></div>
    </div>
    <div class="flex flex-1 min-h-0">
      <div class="w-[35px] shrink-0 pl-[2px] pt-[11px] flex flex-col gap-[2px] text-[#c4c4c4]">
        <div class="h-[33px] mb-[9px] shrink-0 rounded-l-[5px] bg-[#2d2d2d] flex items-center justify-center"><svg class="w-[19px] h-[19px]" viewBox="0 0 20 20"><path d="M4 .5v10M1 11h6.500v2h-6.500zM1.500 13h5.500v2.500a2.700 3.500 0 0 1-5.500 0z" fill="currentColor" stroke="currentColor" stroke-width="1.100"/><path d="M10.500 1v4.500l3 2.700V17a2 2 0 0 0 4 0V8.200l2-2.700V1h-1.500v4h-5V1z" fill="currentColor"/></svg></div>
        <div class="h-[33px] shrink-0 rounded-l-[5px] bg-[#2d2d2d] flex items-center justify-center"><svg class="w-[19px] h-[19px]" viewBox="0 0 20 20"><path d="M5 1h5.500l1 2.500H4z" fill="currentColor"/><path d="M.5 4h19v15H.5zM3 7v9h11V7z" fill="currentColor" fill-rule="evenodd"/><path d="M4 9h9M4 11.500h9M4 14h9" stroke="#777" stroke-width="1.200"/><path d="M15.500 7.500h2.500v2h-2.500zm0 5h2.500v3h-2.500z" fill="#2d2d2d"/></svg></div>
        <div class="h-[33px] shrink-0 rounded-l-[5px] bg-[#2d2d2d] flex items-center justify-center"><svg class="w-[19px] h-[19px]" viewBox="0 0 20 20"><path d="M3 .5h14l2.500 2v6.500H16V7H4v2H.5V2.500z" fill="currentColor"/><path d="M4.500 8h11v11h-11z" fill="#999"/><path d="M6 17l3-5 2 2.500 1.500-1.500 2 4z" fill="#2d2d2d"/></svg></div>
        <div class="h-[33px] shrink-0 rounded-l-[5px] bg-[#2d2d2d] flex items-center justify-center"><svg class="w-[19px] h-[19px]"><use href="#layers"/></svg></div>
        <div class="h-[33px] shrink-0 rounded-l-[5px] bg-[#2d2d2d] flex items-center justify-center"><svg class="w-[20px] h-[20px]"><use href="#scene"/></svg></div>
        <div class="h-[33px] shrink-0 rounded-l-[5px] bg-[#2d2d2d] flex items-center justify-center"><svg class="w-[20px] h-[20px] text-[#cc5f6a]" viewBox="0 0 20 20"><circle cx="10" cy="10" r="8.600" fill="none" stroke="currentColor" stroke-width="1.300"/><path d="M4 4l6-2.500 3 1.500-1 4-3 1.500-2-.5-1 2 2 1.500 2.500 2-1 4-2-1.500-.5-3-2.500-2L2 8zM15 5.500l3 1-1 5-2.500-1.500-1-2.500zM16.500 3.500 19 1" fill="currentColor"/></svg></div>
      </div>
      <div class="flex-1 bg-[#383838] flex flex-col overflow-hidden">
        <div class="h-[120px] shrink-0 bg-[#424242] flex flex-col">
          <div class="flex items-center h-[44px] pl-[13px] pr-[12px] text-[#e0e0e0]"><svg class="w-[18px] h-[18px]"><use href="#obj"/></svg><span class="ml-[11px]">Fjarðabyggð</span><svg class="ml-auto w-[19px] h-[19px] text-[#a8a8a8]" viewBox="0 0 20 20"><path d="M12.500 1.500 18.500 7l-2 .8-3.500 3.400-.5 4-1.700 1.500L3.500 9.500 5 7.800l4-.5L12 3.500zM7 13 1.500 18.500" fill="none" stroke="currentColor" stroke-width="1.300"/></svg></div>
          <div class="mt-[11px] ml-[11px] mr-[10px] h-[24px] flex rounded-[4px] overflow-hidden text-[#e6e6e6]"><div class="w-[38px] bg-[#2b2b2b] flex items-center pl-[5px]"><svg class="w-[18px] h-[18px]"><use href="#obj"/></svg><svg class="w-[10px] h-[10px] ml-[3px]"><use href="#chev"/></svg></div><div class="flex-1 ml-px bg-[#1d1d1d] flex items-center pl-[10px]">Fjarðabyggð</div></div>
          <div class="mt-[13px] flex items-center h-[28px] pl-[11px] pr-[6px] text-[14.300px]"><svg class="w-[8px] h-[9px]" viewBox="0 0 8 9"><path d="M0 .5h8L4 8.500z" fill="#a0a0a0"/></svg><span class="ml-[9px]">Transform</span><svg class="ml-auto w-[16px] h-[8px]" viewBox="0 0 16 8"><path d="M0 1.500h16M0 5.500h16" stroke="#b8b8b8" stroke-width="1.800" stroke-dasharray="2 2.300"/></svg></div>
        </div>
        <div class="pt-[10px] flex flex-col" id="fields"></div>
      </div>
    </div>
  </div>
</div>
</div>

<!-- status bar -->
<div class="h-[23px] shrink-0 bg-[#303030] flex items-center text-[#a0a0a0] pl-[14px] pr-[11px]">
  <svg class="w-[16px] h-[20px]" viewBox="0 0 16 20"><use href="#mouse"/><path d="M7.500 1v10H1.500V4.500L4 1z" fill="#b5b5b5"/></svg><span class="ml-[12px] w-[284px] tracking-[-0.100px]">Set Active Modifier</span>
  <svg class="w-[16px] h-[20px]" viewBox="0 0 16 20"><use href="#mouse"/><rect x="6" y="4" width="4" height="7" rx="2" fill="#b5b5b5"/></svg><span class="ml-[12px] w-[282px] tracking-[0px]">Pan View</span>
  <svg class="w-[16px] h-[20px]" viewBox="0 0 16 20"><use href="#mouse"/><path d="M8.500 1v10h6V4.500L12 1z" fill="#b5b5b5"/></svg><span class="ml-[12px] tracking-[-0.100px]">Context Menu</span>
  <span class="ml-auto tracking-[0.100px]">2.92.0</span>
</div>

<script>
// ruler ticks every ten frames
let r = '';
for (let f = 10; f <= 250; f += 10) r += `<span class="w-[58.930px] shrink-0 text-center">${f}</span>`;
document.getElementById('ruler').innerHTML = r;

// outliner: name, x of the data icon (null when cut off)
const items = [['Akrahreppur',1809],['Akraneskaupstaður',1854],['Akureyrarbær',1819.500],['Bláskógabyggð',1828.500],['Blönduósbær',1815.500],['Bolungarvíkurkaupstaður',null],['Borgarbyggð',1813.500],['Dalabyggð',1799.500],['Dalvíkurbyggð',1822.500],['Eyja- og Miklaholtshreppur',null],['Eyjafjarðarsveit',1829.500],['Fjallabyggð',1802.500],['Fjarðabyggð',1809.500],['Fljótsdalshreppur',1839.500],['Flóahreppur',1806.500],['Garðabær',1795.500],['Grindavíkurbær',1829.500],['Grundarfjarðarbær',1849.500],['Grímsnes- og Grafningshreppur',null],['Grýtubakkahreppur',1854],['Hafnarfjarðarkaupstaður',null]];
const eye = '<svg class="w-[17px] h-[13px] shrink-0 mr-[13px] -mt-[2px] text-[#dcdcdc]"><use href="#eye"/></svg>';
const check = '<svg class="w-[14px] h-[14px] shrink-0 mr-[11px] ml-auto -mt-px" viewBox="0 0 14 14"><rect width="14" height="14" rx="2" fill="#dcdcdc"/><path d="m3 7 3 3.500 5.500-7.500" fill="none" stroke="#222" stroke-width="1.800"/></svg>';
const coll = (n, ring) => `<svg class="w-[8px] h-[9px] ml-[33px] shrink-0" viewBox="0 0 8 9"><path d="M0 0h8L4 9z" fill="#c0c0c0"/></svg><div class="ml-[9px] w-[24px] h-[23px] shrink-0 rounded-[5px] flex items-center justify-center ${ring ? 'bg-[#555]' : ''}"><svg class="w-[18px] h-[18px] text-[#dcdcdc]"><use href="#box"/></svg></div><span class="ml-[6px] mt-[3px]">${n}</span>${check}${eye}`;
const arrow = '<svg class="w-[8px] h-[9px] ml-[59px] shrink-0" viewBox="0 0 8 9"><path d="M.5.500v8l7-4z" fill="#c0c0c0"/></svg>';
const leaf = (n, icon, sel, w, data) => `${arrow}<div class="ml-[8px] w-[25px] h-[23px] shrink-0 rounded-[5px] flex items-center justify-center ${sel ? 'bg-[#62779f] [--hole:#62779f] text-[#dc9466]' : '[--hole:#2a2a2a] text-[#cf8850]'}"><svg class="w-[18px] h-[18px] -mt-px"><use href="${icon}"/></svg></div><div class="ml-[5px] w-[166px] h-full shrink-0 overflow-hidden flex items-center"><span class="shrink-0 mt-[4px] ${sel ? 'text-[#f2a33a]' : ''}" style="width:${w}px">${n}</span>${data}</div><div class="flex-1"></div>${eye}`;
const md = '<svg class="w-[18px] h-[18px] shrink-0 -mt-[2px] text-[#19b78e]"><use href="#mdata"/></svg>';
const rows = ['<svg class="w-[18px] h-[18px] ml-[28px] shrink-0 text-[#dcdcdc]"><use href="#box"/></svg><span class="ml-[9px] mt-[3px]">Scene Collection</span>',
  coll('Collection', true),
  leaf('Camera', '#cam', false, 77, '<div class="w-[24px] h-[23px] shrink-0 rounded-[5px] bg-[#555] flex items-center justify-center text-[#19b78e]"><svg class="w-[18px] h-[18px]"><use href="#camo"/></svg></div>'),
  leaf('Light', '#bulb', false, 59, '<svg class="w-[18px] h-[18px] shrink-0 text-[#19b78e]"><use href="#ldata"/></svg>'),
  coll('boundary-polygon-lvl6', false)];
for (const [n, x] of items) rows.push(leaf(n, '#mesh', n === 'Fjarðabyggð', x ? x - 9 - 1693 : 300, x ? md : ''));
document.getElementById('tree').innerHTML = rows.map((h, i) => `<div class="h-[25px] shrink-0 flex items-center ${i === 17 ? 'bg-[#3b5689]' : i % 2 ? 'bg-[#2d2d2d]' : 'bg-[#282828]'}">${h}</div>`).join('');

// transform fields: label, value, corner rounding, space below
const f = [['Location X','4.9615 m','rounded-t-[4px]','mb-px'],['Y','0.007057 m','','mb-px'],['Z','0 m','rounded-b-[4px]','mb-[7px]'],['Rotation X','0°','rounded-t-[4px]','']];
document.getElementById('fields').innerHTML = f.map(([l, v, c, m]) => `<div class="flex items-start text-[#e0e0e0] ${m}"><span class="w-[104px] text-right pt-[6px]">${l}</span><div class="ml-[13px] w-[119px] h-[24px] bg-[#585858] flex items-center justify-center ${c}">${v}</div><svg class="ml-[4px] mt-[4px] w-[18px] h-[15px] text-[#909090]"><use href="#lock"/></svg><div class="ml-[13px] mt-[9px] w-[5px] h-[5px] rounded-full bg-[#d0d0d0]"></div></div>`).join('');
</script>
</body>
</html>
